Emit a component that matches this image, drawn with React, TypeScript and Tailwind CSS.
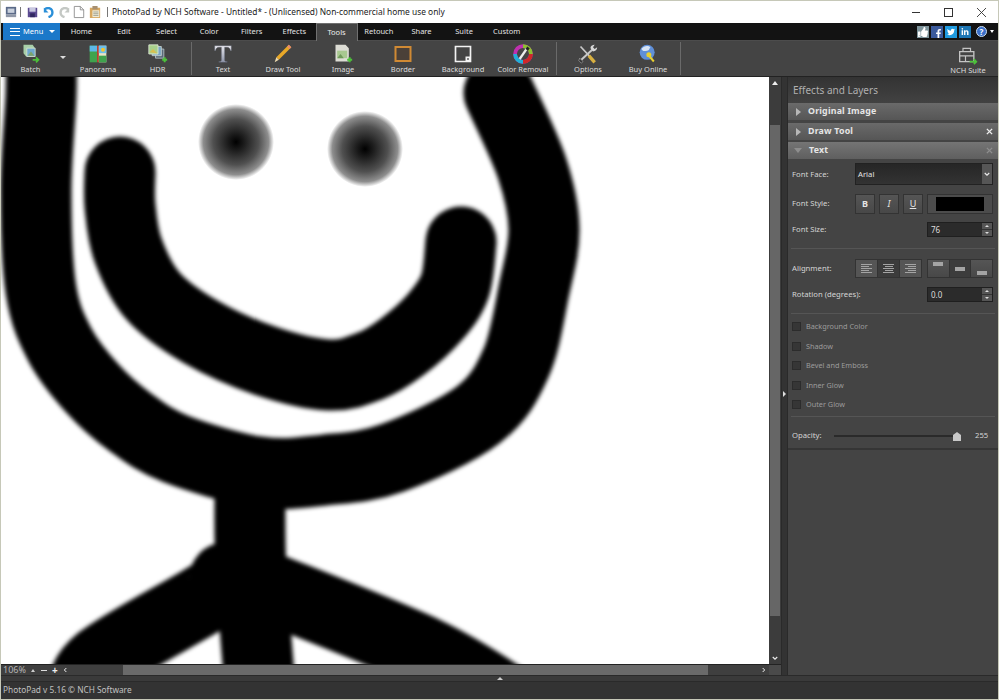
import type { ReactNode } from "react";
import { FaFacebookF, FaLinkedinIn, FaThumbsUp, FaTwitter } from "react-icons/fa";

type Pt = [number, number];

// catmull-rom through the points, good enough for the brush strokes
function smooth(pts: Pt[]) {
  let d = `M${pts[0][0]} ${pts[0][1]}`;
  for (let i = 0; i < pts.length - 1; i++) {
    const p0 = pts[i - 1] || pts[i];
    const p1 = pts[i];
    const p2 = pts[i + 1];
    const p3 = pts[i + 2] || p2;
    const c1x = p1[0] + (p2[0] - p0[0]) / 6;
    const c1y = p1[1] + (p2[1] - p0[1]) / 6;
    const c2x = p2[0] - (p3[0] - p1[0]) / 6;
    const c2y = p2[1] - (p3[1] - p1[1]) / 6;
    d += ` C${c1x} ${c1y} ${c2x} ${c2y} ${p2[0]} ${p2[1]}`;
  }
  return d;
}

const arms: Pt[] = [[41, 60], [41, 96], [36, 191], [41, 290], [60, 345], [92, 388], [130, 422], [176, 449], [259, 472], [325, 470], [392, 458], [478, 415], [516, 363], [534, 290], [544, 229], [532, 168], [499, 93]];
const mouth: Pt[] = [[120, 172], [120, 206], [128, 250], [153, 296], [201, 332], [266, 361], [329, 375], [370, 366], [402, 347], [435, 317], [455, 286], [461, 242]];
const spine: Pt[] = [[250, 490], [251, 570], [261, 700]];
const legLeft: Pt[] = [[225, 578], [209, 596], [100, 661], [80, 700]];
const legRight: Pt[] = [[262, 585], [425, 652], [512, 703]];

function Drawing() {
  return (
    <svg viewBox="1 77 769 587" className="block w-[769px] h-[587px]">
      <defs>
        <filter id="brush" x="-10%" y="-10%" width="120%" height="120%">
          <feGaussianBlur stdDeviation="2.2" />
        </filter>
        <radialGradient id="eye">
          <stop offset="0" stopColor="#000" />
          <stop offset="0.22" stopColor="#1c1c1c" />
          <stop offset="0.6" stopColor="#505050" />
          <stop offset="0.86" stopColor="#8e8e8e" />
          <stop offset="1" stopColor="#fff" />
        </radialGradient>
      </defs>
      <g fill="none" stroke="#000" strokeWidth="71" strokeLinecap="round" strokeLinejoin="round" filter="url(#brush)">
        <path d={smooth(arms)} />
        <path d={smooth(mouth)} />
        <path d={smooth(spine)} />
        <path d={smooth(legLeft)} />
        <path d={smooth(legRight)} />
      </g>
      <circle cx="236" cy="142" r="38" fill="url(#eye)" />
      <circle cx="365" cy="149" r="38" fill="url(#eye)" />
    </svg>
  );
}

function Ico({ children }: { children: ReactNode }) {
  return (
    <svg viewBox="0 0 24 24" className="w-[20px] h-[20px]">
      {children}
    </svg>
  );
}

const plus = <path d="M17 19h6M20 16v6" stroke="#4cc23a" strokeWidth="2.4" />;

const BatchIcon = (
  <Ico>
    <path d="M3 1h11l2 3v8l-4 3H6L3 11z" fill="#a8cfa8" />
    <path d="M7 5h10v10H7z" fill="#6fa8cf" stroke="#d8e4d0" />
    <path d="M8 14l4-5 4 5z" fill="#7da36a" />
    <path d="M14 19h7m-3-3l3 3-3 3" fill="none" stroke="#4cc23a" strokeWidth="2" />
  </Ico>
);
const PanoramaIcon = (
  <Ico>
    <path d="M2 2h9v20H2z" fill="#3fa34d" />
    <path d="M2 2h9v7H2z" fill="#5cb8e8" />
    <path d="M11 2h2v20h-2z" fill="#d23a2c" />
    <path d="M13 2h9v20h-9z" fill="#e9e4c8" />
    <path d="M13 2h9v9h-9z" fill="#6cc0ec" />
    <circle cx="18" cy="7" r="2.4" fill="#f4c430" />
    <path d="M13 14h9v8h-9z" fill="#3fa34d" />
  </Ico>
);
const HdrIcon = (
  <Ico>
    <path d="M9 6h10v11H9z" fill="#5a6a78" stroke="#b8c4c8" />
    <path d="M5 3h11v11H5z" fill="#7aa6c4" stroke="#c8d4d0" />
    <path d="M1 1h11v11H1z" fill="#a8d08c" stroke="#e0e8d8" />
    <path d="M2 10l4-4 5 5z" fill="#d8c050" />
    {plus}
  </Ico>
);
const TextIcon = (
  <Ico>
    <defs>
      <linearGradient id="tee" x1="0" y1="0" x2="0" y2="1">
        <stop offset="0" stopColor="#e8e8ee" />
        <stop offset="1" stopColor="#8e94a8" />
      </linearGradient>
    </defs>
    <path d="M2 2h20v6h-1c-.5-2-1.500-4-4-4H14v15.500c0 1 1 1.500 3 1.500v1H7v-1c2 0 3-.5 3-1.500V4H7C4.500 4 3.500 6 3 8H2z" fill="url(#tee)" stroke="#555a68" strokeWidth=".5" />
  </Ico>
);
const PencilIcon = (
  <Ico>
    <path d="M19 1l3 3L7 19l-3-3z" fill="#e8a828" />
    <path d="M19 1l3 3-2 2-3-3z" fill="#e88a70" />
    <path d="M4 16l3 3-5 3z" fill="#f0dcb0" />
  </Ico>
);
const ImageIcon = (
  <Ico>
    <path d="M3 1h12l4 4v16H3z" fill="#dcdcd4" />
    <path d="M5 8h12v9H5z" fill="#a8c890" />
    <path d="M5 17l4-5 4 5z" fill="#6f9a5a" />
    {plus}
  </Ico>
);
const BorderIcon = (
  <Ico>
    <path d="M3 3.500h18v17H3z" fill="#4a4038" stroke="#d08a34" strokeWidth="2.400" />
  </Ico>
);
const BackgroundIcon = (
  <Ico>
    <path d="M3 3h18v18H3z" fill="#444" stroke="#f2f2f2" strokeWidth="2" />
    <path d="M15 15h6v6h-6z" fill="#f2f2f2" />
    <path d="M17 17h2v2h-2z" fill="#444" />
  </Ico>
);
const WheelIcon = (
  <Ico>
    <circle cx="12" cy="12" r="9.500" fill="none" stroke="#c030b0" strokeWidth="4.500" />
    <path d="M12 2.500a9.500 9.500 0 0 1 9.500 9.500" fill="none" stroke="#8cc030" strokeWidth="4.500" />
    <path d="M21.500 12a9.500 9.500 0 0 1-9.500 9.500" fill="none" stroke="#d02828" strokeWidth="4.500" />
    <path d="M12 21.500A9.500 9.500 0 0 1 2.500 12" fill="none" stroke="#20b0d8" strokeWidth="4.500" />
    <path d="M8 18L17 5" stroke="#ececec" strokeWidth="2.800" />
    <path d="M15 6l3 2 2-3-3-2z" fill="#222" />
  </Ico>
);
const OptionsIcon = (
  <Ico>
    <path d="M3 3l13 14" stroke="#c8c8c8" strokeWidth="2" />
    <path d="M13 14l7 8" stroke="#d8b040" strokeWidth="4" />
    <path d="M18 6L4 19" stroke="#c8c8c8" strokeWidth="2.400" />
    <path d="M15 5c0-3 3-4 5-4l-2 3 2 2 3-2c0 3-2 5-5 5z" fill="#d8d8d8" />
    <path d="M2 17l4 4-2 2-3-3z" fill="#333" stroke="#c8c8c8" strokeWidth=".6" />
  </Ico>
);
const BuyIcon = (
  <Ico>
    <circle cx="11" cy="10" r="9" fill="#5f8fd8" />
    <path d="M4 6c3-4 8-5 11-2-2 2-1 4-4 4S7 10 4 6z" fill="#d8e4f4" />
    <circle cx="13" cy="13" r="3" fill="#e8d030" />
    <path d="M14 15l5 6" stroke="#e8d030" strokeWidth="2.400" />
  </Ico>
);
const SuiteIcon = (
  <Ico>
    <path d="M2 8h17v12H2z" fill="none" stroke="#c4c4c4" strokeWidth="1.600" />
    <path d="M6 8V4h9v4M2 13h17M9 13v7" fill="none" stroke="#c4c4c4" strokeWidth="1.400" />
    <path d="M14 20h8m-3-3l3 3-3 3" fill="none" stroke="#4cc23a" strokeWidth="2" />
  </Ico>
);

function Tool({ icon, label, w = "w-[60px]" }: { icon: ReactNode; label: string; w?: string }) {
  return (
    <div className={`${w} shrink-0 flex flex-col items-center h-full pt-[3px]`}>
      <div className="w-[20px] h-[20px]">{icon}</div>
      <div className="text-[7.500px] leading-[10px] text-[#dcdcdc] whitespace-nowrap">{label}</div>
    </div>
  );
}

const ToolSep = () => <div className="w-[1px] h-[33px] bg-[#6a6a6a] shrink-0" />;

function TitleBar() {
  return (
    <div className="h-[22px] bg-white flex items-center shrink-0 text-[#222]">
      <svg viewBox="0 0 14 14" className="ml-[4px] w-[12px] h-[12px]">
        <path d="M1 1h12v9H1z" fill="#5a6a88" />
        <path d="M3 3h8v5H3z" fill="#c8d0dc" />
        <path d="M1 10h12v3H1z" fill="#9098a8" />
      </svg>
      <div className="ml-[3px] w-[1px] h-[10px] bg-[#777]" />
      <svg viewBox="0 0 14 14" className="ml-[6px] w-[11px] h-[11px]">
        <path d="M1 1h12v12H1z" fill="#5a4a90" />
        <path d="M3 1h8v5H3z" fill="#c8c8e0" />
        <path d="M4 8h6v5H4z" fill="#302860" />
      </svg>
      <svg viewBox="0 0 14 14" className="ml-[5px] w-[11px] h-[11px]">
        <path d="M2 3c4-3 10-2 10 4 0 3-2 5-5 6" fill="none" stroke="#2a8fd8" strokeWidth="3" />
        <path d="M1 1v6h6z" fill="#2a8fd8" />
      </svg>
      <svg viewBox="0 0 14 14" className="ml-[5px] w-[11px] h-[11px]">
        <path d="M12 3C8 0 2 1 2 7c0 3 2 5 5 6" fill="none" stroke="#c4c8c4" strokeWidth="3" />
        <path d="M13 1v6H7z" fill="#c4c8c4" />
      </svg>
      <svg viewBox="0 0 14 16" className="ml-[3px] w-[12px] h-[14px]">
        <path d="M1.500 1.500h7l4 4v9h-11z" fill="#fff" stroke="#888" />
        <path d="M8.500 1.500v4h4" fill="none" stroke="#888" />
      </svg>
      <svg viewBox="0 0 14 16" className="ml-[4px] w-[12px] h-[14px]">
        <path d="M1 3h12v12H1z" fill="#d8a860" />
        <path d="M4 1h6v4H4z" fill="#a89070" />
        <path d="M4 6h8v8H4z" fill="#f0ecd8" />
        <path d="M5 8h6M5 10h6M5 12h6" stroke="#9a9a8a" />
      </svg>
      <div className="ml-[6px] w-[1px] h-[10px] bg-[#777]" />
      <div className="ml-[4px] text-[8.400px] leading-none whitespace-nowrap">
        PhotoPad by NCH Software - Untitled* - (Unlicensed) Non-commercial home use only
      </div>
      <div className="ml-auto flex items-center">
        <div className="w-[33px] flex justify-center">
          <div className="w-[8px] h-[1px] bg-[#333]" />
        </div>
        <div className="w-[33px] flex justify-center">
          <div className="w-[9px] h-[9px] border border-[#333]" />
        </div>
        <div className="w-[33px] flex justify-center">
          <svg viewBox="0 0 10 10" className="w-[9px] h-[9px]">
            <path d="M0 0l10 10M10 0L0 10" stroke="#333" strokeWidth="1" />
          </svg>
        </div>
      </div>
    </div>
  );
}

const tabs = ["Home", "Edit", "Select", "Color", "Filters", "Effects", "Tools", "Retouch", "Share", "Suite", "Custom"];

function TabBar() {
  return (
    <div className="h-[18px] bg-[#131313] flex items-end shrink-0 border-b border-[#4c4c4c]">
      <div className="ml-[2px] w-[57px] h-[17px] bg-[#1b78c9] flex items-center pl-[7px] gap-[3px] text-white text-[7.500px]">
        <div className="w-[10px] h-[8px] border-y border-white flex items-center">
          <div className="w-full h-[1px] bg-white" />
        </div>
        <span>Menu</span>
        <div className="ml-[3px] w-0 h-0 border-x-[3px] border-x-transparent border-t-[3px] border-t-white" />
      </div>
      <div className="flex h-full items-end">
        {tabs.map((t) =>
          t === "Tools" ? (
            <div key={t} className="w-[42px] h-[18px] -mb-[1px] bg-[#444] border-x border-t border-[#707070] text-[#eee] text-[7.500px] flex items-center justify-center">
              {t}
            </div>
          ) : (
            <div key={t} className="w-[42.600px] h-[17px] text-[#e4e4e4] text-[7.500px] flex items-center justify-center">
              {t}
            </div>
          )
        )}
      </div>
      <div className="ml-auto mr-[4px] h-full flex items-center gap-[2px]">
        <div className="w-[12px] h-[12px] bg-[#7f959c] text-white flex items-center justify-center text-[10px]">
          <FaThumbsUp />
        </div>
        <div className="w-[12px] h-[12px] bg-[#3b5a9c] text-white flex items-end justify-end text-[9px]">
          <FaFacebookF />
        </div>
        <div className="w-[12px] h-[12px] bg-[#1f9be0] text-white flex items-center justify-center text-[8px]">
          <FaTwitter />
        </div>
        <div className="w-[12px] h-[12px] bg-[#1e77b5] text-white flex items-center justify-center text-[8px]">
          <FaLinkedinIn />
        </div>
        <div className="ml-[3px] w-[11px] h-[11px] rounded-full bg-[#3a6fc8] border border-[#cde] text-white flex items-center justify-center text-[8px] font-bold">
          ?
        </div>
        <div className="ml-[1px] w-0 h-0 border-x-[2px] border-x-transparent border-t-[3px] border-t-white" />
      </div>
    </div>
  );
}

function Toolbar() {
  return (
    <div className="h-[36px] bg-[#444444] flex items-center shrink-0 border-b border-[#222]">
      <Tool icon={BatchIcon} label="Batch" w="w-[59px]" />
      <div className="w-[8px] shrink-0 -mt-[2px]">
        <div className="w-0 h-0 border-x-[3px] border-x-transparent border-t-[3px] border-t-[#ddd]" />
      </div>
      <Tool icon={PanoramaIcon} label="Panorama" />
      <Tool icon={HdrIcon} label="HDR" w="w-[59px]" />
      <div className="w-[4px]" />
      <ToolSep />
      <div className="w-[1px]" />
      <Tool icon={TextIcon} label="Text" />
      <Tool icon={PencilIcon} label="Draw Tool" />
      <Tool icon={ImageIcon} label="Image" />
      <Tool icon={BorderIcon} label="Border" />
      <Tool icon={BackgroundIcon} label="Background" />
      <Tool icon={WheelIcon} label="Color Removal" />
      <div className="w-[3px]" />
      <ToolSep />
      <div className="w-[1px]" />
      <Tool icon={OptionsIcon} label="Options" />
      <Tool icon={BuyIcon} label="Buy Online" />
      <div className="w-[2px]" />
      <ToolSep />
      <div className="ml-auto">
        <Tool icon={SuiteIcon} label="NCH Suite" />
      </div>
    </div>
  );
}

function AccRow({ label, open, close }: { label: string; open?: boolean; close?: "on" | "dim" }) {
  return (
    <div className={`h-[17px] flex items-center bg-gradient-to-b ${open ? "from-[#757575] to-[#5f5f5f]" : "from-[#6a6a6a] to-[#565656]"}`}>
      {open ? (
        <div className="ml-[6px] w-0 h-0 border-x-[4px] border-x-transparent border-t-[5px] border-t-[#8e8e8e]" />
      ) : (
        <div className="ml-[8px] w-0 h-0 border-y-[4px] border-y-transparent border-l-[5px] border-l-[#b8b8b8]" />
      )}
      <span className="ml-[7px] text-[8.800px] font-bold text-[#e6e6e6] tracking-[0.2px]">{label}</span>
      {close && (
        <svg viewBox="0 0 8 8" className="ml-auto mr-[5px] w-[7px] h-[7px]">
          <path d="M1 1l6 6M7 1L1 7" stroke={close === "on" ? "#eee" : "#8e8e8e"} strokeWidth="1.600" />
        </svg>
      )}
    </div>
  );
}

function Spinner() {
  return (
    <div className="w-[11px] h-full flex flex-col bg-[#555] border-l border-[#2a2a2a]">
      <div className="flex-1 flex items-center justify-center border-b border-[#333]">
        <div className="w-0 h-0 border-x-[2px] border-x-transparent border-b-[2px] border-b-[#ddd]" />
      </div>
      <div className="flex-1 flex items-center justify-center">
        <div className="w-0 h-0 border-x-[2px] border-x-transparent border-t-[2px] border-t-[#ddd]" />
      </div>
    </div>
  );
}

function NumberField({ value }: { value: string }) {
  return (
    <div className="ml-auto w-[66px] h-[15px] flex bg-[#2b2b2b] border border-[#1f1f1f]">
      <div className="flex-1 pl-[3px] text-[8px] leading-[13px] text-[#ddd]">{value}</div>
      <Spinner />
    </div>
  );
}

function StyleBtn({ children }: { children: ReactNode }) {
  return (
    <div className="w-[20px] h-[20px] bg-gradient-to-b from-[#555] to-[#484848] border border-[#333] flex items-center justify-center text-[9px] text-[#e4e4e4]">
      {children}
    </div>
  );
}

function Lines({ align }: { align: "left" | "center" | "right" }) {
  const cls = align === "left" ? "items-start" : align === "center" ? "items-center" : "items-end";
  return (
    <div className={`flex flex-col gap-[1px] w-[11px] ${cls}`}>
      {[11, 8, 11, 8, 11].map((w, i) => (
        <div key={i} className={`h-[1px] bg-[#a4a4a4] ${w === 11 ? "w-[11px]" : "w-[8px]"}`} />
      ))}
    </div>
  );
}

function Vert({ pos }: { pos: "top" | "mid" | "bottom" }) {
  const cls = pos === "top" ? "justify-start pt-[2px]" : pos === "mid" ? "justify-center" : "justify-end pb-[2px]";
  return (
    <div className={`flex-1 h-full flex flex-col items-center ${cls} ${pos === "mid" ? "bg-[#3c3c3c]" : "bg-gradient-to-b from-[#555] to-[#484848]"} border-l border-[#333] first:border-l-0`}>
      <div className="w-[10px] h-[4px] bg-[#a4a4a4]" />
    </div>
  );
}

const Divider = () => <div className="h-[1px] bg-[#555] mx-[3px]" />;

const effects = ["Background Color", "Shadow", "Bevel and Emboss", "Inner Glow", "Outer Glow"];

function Panel() {
  return (
    <div className="w-[210px] shrink-0 h-full bg-[#444444] flex flex-col">
      <div className="h-[26px] shrink-0 bg-gradient-to-b from-[#333] to-[#424242] flex items-center pl-[5px] text-[10px] text-[#b0b0b0]">
        Effects and Layers
      </div>
      <AccRow label="Original Image" />
      <div className="h-[3px]" />
      <AccRow label="Draw Tool" close="on" />
      <div className="h-[2px]" />
      <AccRow label="Text" open close="dim" />

      <div className="mt-[4px] h-[22px] flex items-center pl-[4px] pr-[5px] text-[7.700px] text-[#d4d4d4]">
        <span className="w-[63px] pt-[1px]">Font Face:</span>
        <div className="flex-1 h-full flex bg-gradient-to-b from-[#262626] to-[#333] border border-[#222]">
          <span className="flex-1 pl-[2px] text-[7.700px] leading-[21px] text-[#e4e4e4]">Arial</span>
          <div className="w-[10px] bg-[#565656] flex items-center justify-center">
            <svg viewBox="0 0 8 6" className="w-[6px] h-[5px]">
              <path d="M1 1l3 3 3-3" fill="none" stroke="#eee" strokeWidth="1.500" />
            </svg>
          </div>
        </div>
      </div>

      <div className="mt-[9px] h-[20px] flex items-center pl-[4px] pr-[5px] text-[7.700px] text-[#d4d4d4]">
        <span className="w-[63px]">Font Style:</span>
        <div className="flex gap-[4px]">
          <StyleBtn><b>B</b></StyleBtn>
          <StyleBtn><i className="font-['Liberation_Serif',serif]">I</i></StyleBtn>
          <StyleBtn><u>U</u></StyleBtn>
        </div>
        <div className="ml-[4px] flex-1 h-full px-[8px] py-[2px] bg-[#4c4c4c] border border-[#333]">
          <div className="w-full h-full bg-black" />
        </div>
      </div>

      <div className="mt-[8px] h-[15px] flex items-center pl-[4px] pr-[5px] text-[7.700px] text-[#d4d4d4]">
        <span>Font Size:</span>
        <NumberField value="76" />
      </div>

      <div className="mt-[11px]"><Divider /></div>

      <div className="mt-[10px] h-[19px] flex items-center pl-[4px] pr-[5px] text-[7.700px] text-[#d4d4d4]">
        <span className="w-[63px] pt-[1px]">Alignment:</span>
        <div className="w-[67px] h-full flex border border-[#333]">
          <div className="flex-1 flex items-center justify-center bg-[#555]"><Lines align="left" /></div>
          <div className="flex-1 flex items-center justify-center bg-[#3c3c3c] border-x border-[#333]"><Lines align="center" /></div>
          <div className="flex-1 flex items-center justify-center bg-[#555]"><Lines align="right" /></div>
        </div>
        <div className="ml-[5px] flex-1 h-full flex border border-[#333]">
          <Vert pos="top" />
          <Vert pos="mid" />
          <Vert pos="bottom" />
        </div>
      </div>

      <div className="mt-[9px] h-[15px] flex items-center pl-[4px] pr-[5px] text-[7.700px] text-[#d4d4d4]">
        <span>Rotation (degrees):</span>
        <NumberField value="0.0" />
      </div>

      <div className="mt-[11px]"><Divider /></div>

      <div className="mt-[3px] flex flex-col pl-[4px]">
        {effects.map((e) => (
          <div key={e} className="h-[19.500px] flex items-center gap-[5px] text-[7.300px] text-[#9c9c9c]">
            <div className="w-[9px] h-[9px] bg-[#363636] border border-[#2c2c2c]" />
            {e}
          </div>
        ))}
      </div>

      <div className="mt-[1px]"><Divider /></div>

      <div className="mt-[13px] h-[12px] flex items-center pl-[4px] text-[7.700px] text-[#d4d4d4]">
        <span className="w-[42px]">Opacity:</span>
        <div className="relative w-[127px] h-[2px] bg-[#2a2a2a]">
          <svg viewBox="0 0 8 9" className="absolute right-0 -top-[3px] w-[8px] h-[9px]">
            <path d="M4 0l4 3v6H0V3z" fill="#c8c8c8" />
          </svg>
        </div>
        <span className="ml-[14px] text-[#d4d4d4]">255</span>
      </div>

      <div className="mt-[6px] h-[2px] bg-[#353535]" />
    </div>
  );
}

export default function App() {
  return (
    <div className="w-[999px] h-[700px] overflow-hidden flex flex-col border border-[#c6c8b8] bg-[#333] font-['Roboto',sans-serif]">
      <TitleBar />
      <TabBar />
      <Toolbar />
      <div className="flex-1 flex min-h-0 flex-col">
        <div className="flex-1 flex min-h-0">
          <div className="flex-1 flex flex-col min-w-0">
            <div className="flex-1 flex min-h-0">
              <div className="flex-1 bg-white overflow-hidden"><Drawing /></div>
              <div className="w-[12px] bg-[#3c3c3c] flex flex-col items-center shrink-0">
                <div className="h-[12px] flex items-center">
                  <div className="w-0 h-0 border-x-[3px] border-x-transparent border-b-[4px] border-b-[#eee]" />
                </div>
                <div className="w-[10px] h-[491px] mt-[36px] bg-[#666]" />
                <div className="flex-1" />
                <div className="h-[12px] flex items-center">
                  <svg viewBox="0 0 8 6" className="w-[6px] h-[5px]">
                    <path d="M1 1l3 3 3-3" fill="none" stroke="#eee" strokeWidth="1.500" />
                  </svg>
                </div>
              </div>
            </div>
            <div className="h-[11px] bg-[#3f3f3f] flex items-center shrink-0 text-[#b4b4b4] text-[9px] border-t border-[#222]">
              <span className="ml-[2px] w-[28px]">106%</span>
              <div className="w-0 h-0 border-x-[2px] border-x-transparent border-b-[3px] border-b-[#ccc]" />
              <span className="ml-[6px] w-[6px] h-[1px] bg-[#ddd]" />
              <span className="ml-[5px] text-[#eee] font-bold text-[10px] leading-none">+</span>
              <svg viewBox="0 0 6 8" className="ml-[5px] w-[4px] h-[6px]">
                <path d="M5 1L2 4l3 3" fill="none" stroke="#eee" strokeWidth="1.500" />
              </svg>
              <div className="ml-[56px] w-[585px] h-full bg-[#6a6a6a]" />
              <svg viewBox="0 0 6 8" className="ml-auto mr-[3px] w-[4px] h-[6px]">
                <path d="M1 1l3 3-3 3" fill="none" stroke="#eee" strokeWidth="1.500" />
              </svg>
              <div className="w-[12px] h-full bg-[#4a4a4a]" />
            </div>
          </div>
          <div className="w-[7px] bg-[#333] shrink-0 flex items-center border-x border-[#2a2a2a] pt-[35px]">
            <div className="ml-[1px] w-0 h-0 border-y-[3px] border-y-transparent border-l-[3px] border-l-[#ddd]" />
          </div>
          <Panel />
        </div>
        <div className="h-[7px] shrink-0 bg-[#3a3a3a] border-y border-[#2a2a2a] flex items-center justify-center">
          <div className="w-0 h-0 border-x-[3px] border-x-transparent border-b-[3px] border-b-[#ccc]" />
        </div>
        <div className="h-[17px] shrink-0 bg-[#333] flex items-center pl-[2px] text-[8.300px] text-[#c0c0c0]">
          PhotoPad v 5.16 © NCH Software
        </div>
      </div>
    </div>
  );
}
